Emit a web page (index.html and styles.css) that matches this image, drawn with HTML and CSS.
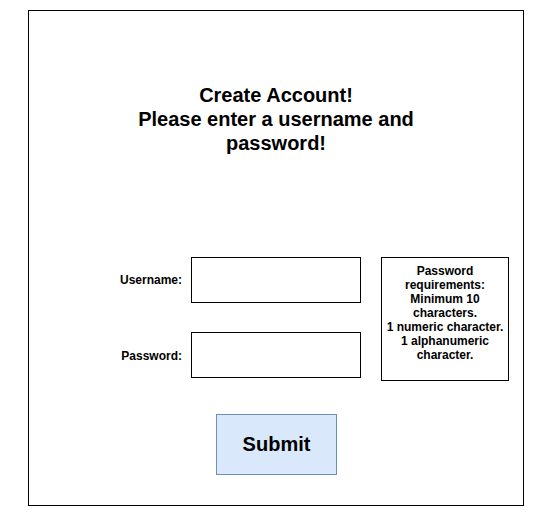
FILE: index.html
```html
<!DOCTYPE html>
<html>
<head>
<meta charset="utf-8">
<link rel="stylesheet" href="styles.css">
</head>
<body>
<div class="frame">
  <h1 class="title">Create Account!<br>Please enter a username and<br>password!</h1>
  <div class="form-row">
    <div class="fields">
      <div class="field">
        <label class="label">Username:</label>
        <div class="input"></div>
      </div>
      <div class="field">
        <label class="label">Password:</label>
        <div class="input"></div>
      </div>
    </div>
    <div class="req">Password requirements: Minimum 10 characters.<br>1 numeric character.<br>1 alphanumeric character.</div>
  </div>
  <div class="submit">Submit</div>
</div>
</body>
</html>
```
FILE: styles.css
```css
html, body {
  margin: 0;
  padding: 0;
  background: #fff;
}
body {
  font-family: "Liberation Sans", Arial, sans-serif;
  color: #000;
}
.frame {
  box-sizing: border-box;
  width: 496px;
  height: 496px;
  margin: 10px 0 0 28px;
  border: 1px solid #000;
  display: flex;
  flex-direction: column;
}
.title {
  margin: 72px 0 0 0;
  font-size: 20px;
  font-weight: bold;
  line-height: 24px;
  text-align: center;
}
.form-row {
  display: flex;
  align-items: flex-start;
  margin-top: 102px;
}
.fields {
  display: flex;
  flex-direction: column;
  gap: 29px;
}
.field {
  display: flex;
  align-items: center;
  gap: 9px;
}
.label {
  width: 153px;
  text-align: right;
  font-size: 12px;
  font-weight: bold;
  line-height: 14px;
}
.field + .field .label {
  margin-top: 2px;
}
.input {
  box-sizing: border-box;
  width: 170px;
  height: 46px;
  border: 1px solid #000;
  background: #fff;
}
.req {
  box-sizing: border-box;
  width: 128px;
  height: 124px;
  margin-left: 20px;
  border: 1px solid #000;
  padding: 6px 2px 0 2px;
  font-size: 12px;
  font-weight: bold;
  line-height: 14px;
  text-align: center;
}
.submit {
  box-sizing: border-box;
  width: 121px;
  height: 61px;
  margin: 33px 0 0 187px;
  background: #dae8fc;
  border: 1px solid #6c8ebf;
  display: flex;
  align-items: center;
  justify-content: center;
  font-size: 20px;
  font-weight: bold;
}
```
